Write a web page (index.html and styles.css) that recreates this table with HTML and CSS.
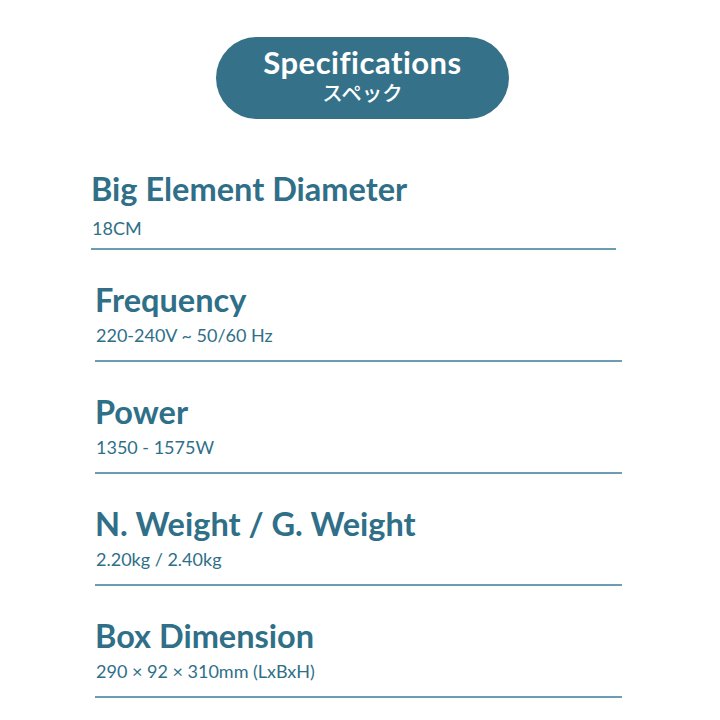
FILE: index.html
```html
<!DOCTYPE html>
<html>
<head>
<meta charset="utf-8">
<link rel="stylesheet" href="styles.css">
</head>
<body>
<div class="page">
  <div class="pill-wrap">
    <div class="pill">
      <div class="pill-title">Specifications</div>
      <div class="pill-sub">スペック</div>
    </div>
  </div>
  <div class="specs">
    <div class="spec first">
      <div class="spec-title">Big Element Diameter</div>
      <div class="spec-value">18CM</div>
    </div>
    <div class="spec">
      <div class="spec-title">Frequency</div>
      <div class="spec-value">220-240V ~ 50/60 Hz</div>
    </div>
    <div class="spec">
      <div class="spec-title">Power</div>
      <div class="spec-value">1350 - 1575W</div>
    </div>
    <div class="spec">
      <div class="spec-title">N. Weight / G. Weight</div>
      <div class="spec-value">2.20kg / 2.40kg</div>
    </div>
    <div class="spec">
      <div class="spec-title">Box Dimension</div>
      <div class="spec-value">290 × 92 × 310mm (LxBxH)</div>
    </div>
  </div>
</div>
</body>
</html>
```
FILE: styles.css
```css
html, body {
  margin: 0;
  padding: 0;
  background: #ffffff;
}
.page {
  width: 720px;
  height: 720px;
  font-family: "Lato", "Noto Sans CJK JP", sans-serif;
  color: #2f6f88;
  padding-top: 37px;
  box-sizing: border-box;
}
.pill-wrap {
  display: flex;
  justify-content: flex-start;
  padding-left: 216px;
}
.pill {
  width: 293px;
  height: 82px;
  border-radius: 41px;
  background: #35728a;
  color: #ffffff;
  display: flex;
  flex-direction: column;
  align-items: center;
  padding-top: 10px;
  box-sizing: border-box;
}
.pill-title {
  font-weight: 700;
  font-size: 31px;
  line-height: 30px;
  letter-spacing: 0.5px;
}
.pill-sub {
  font-family: "Noto Sans CJK JP", sans-serif;
  font-size: 20.5px;
  line-height: 24px;
  font-weight: 500;
  margin-top: 3px;
}
.specs {
  margin-top: 52px;
  display: flex;
  flex-direction: column;
}
.spec {
  margin-left: 95px;
  width: 527px;
  border-bottom: 2px solid #6a9db0;
  padding-bottom: 15px;
  margin-top: 32px;
}
.spec.first {
  margin-left: 91px;
  width: 525px;
  margin-top: 0;
  padding-bottom: 10px;
}
.spec-title {
  font-weight: 700;
  font-size: 32.5px;
  line-height: 36px;
}
.spec-value {
  font-size: 18px;
  line-height: 20px;
  margin-top: 7px;
  padding-left: 1px;
}
.spec.first .spec-value {
  margin-top: 11px;
}
```
